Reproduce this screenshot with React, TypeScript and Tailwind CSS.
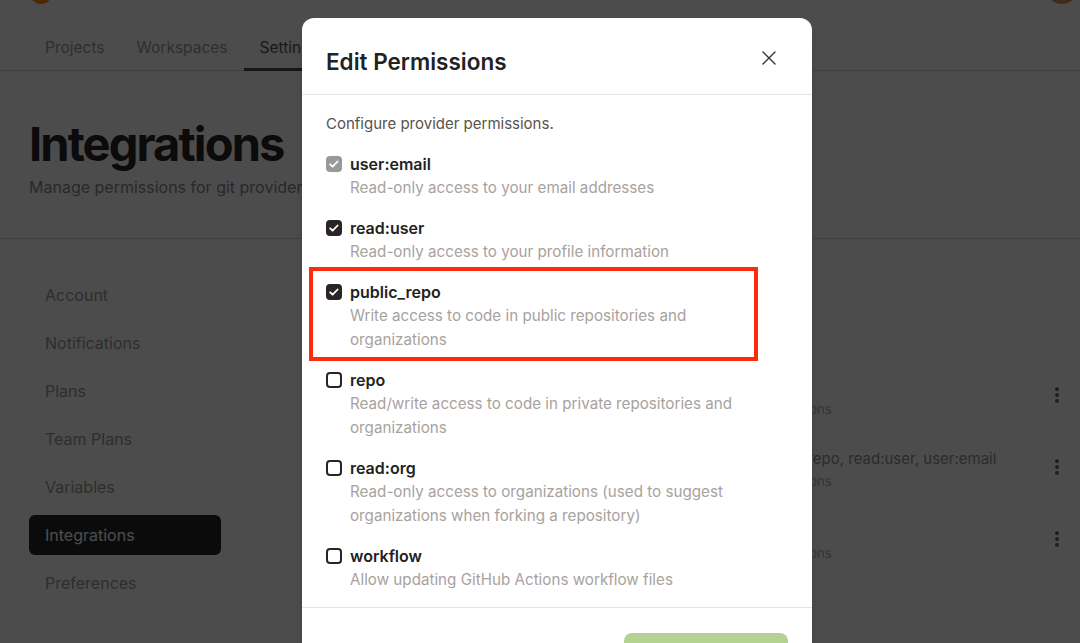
import { EllipsisVertical } from "lucide-react";

const tabs = [
  { label: "Projects", active: false },
  { label: "Workspaces", active: false },
  { label: "Settings", active: true },
];

const menu = ["Account", "Notifications", "Plans", "Team Plans", "Variables", "Integrations", "Preferences"];

const providers = [
  { id: "gitlab", scopes: "api" },
  { id: "github", scopes: "public_repo, read:user, user:email" },
  { id: "bitbucket", scopes: "repo" },
];

type Perm = { name: string; desc: string; state: "locked" | "on" | "off" };

const perms: Perm[] = [
  { name: "user:email", desc: "Read-only access to your email addresses", state: "locked" },
  { name: "read:user", desc: "Read-only access to your profile information", state: "on" },
  { name: "public_repo", desc: "Write access to code in public repositories and organizations", state: "on" },
  { name: "repo", desc: "Read/write access to code in private repositories and organizations", state: "off" },
  {
    name: "read:org",
    desc: "Read-only access to organizations (used to suggest organizations when forking a repository)",
    state: "off",
  },
  { name: "workflow", desc: "Allow updating GitHub Actions workflow files", state: "off" },
];

function Checkbox({ state }: { state: Perm["state"] }) {
  if (state === "off") {
    return <span className="h-4 w-4 shrink-0 rounded-[4px] border-2 border-[#292524] bg-white" />;
  }
  return (
    <span
      className={`flex h-4 w-4 shrink-0 items-center justify-center rounded-[4px] ${
        state === "locked" ? "bg-[#9a9a9a]" : "bg-[#292524]"
      }`}
    >
      <svg width="16" height="16" viewBox="0 0 16 16" fill="none">
        <path d="M4.2 8.3l2.4 2.4 5-5.2" stroke="white" strokeWidth="1.8" strokeLinecap="round" strokeLinejoin="round" />
      </svg>
    </span>
  );
}

export default function App() {
  return (
    <div className="relative h-[643px] w-[1080px] overflow-hidden bg-white font-['Inter',sans-serif]">
      {/* top strip: logo and avatar are cut off by the viewport */}
      <div className="flex h-[4px] items-end justify-between overflow-hidden pl-[30px] pr-[2px]">
        <span className="h-[22px] w-[22px] shrink-0 rounded-full bg-[#ff8a00]" />
        <span className="h-[32px] w-[32px] shrink-0 rounded-full bg-[#d7925a]" />
      </div>

      {/* tabs */}
      <nav className="flex border-b border-[#d8d8d8] px-[29px]">
        {tabs.map((t) => (
          <div
            key={t.label}
            className={`-mb-px border-b-[3px] px-4 pt-[32px] pb-[8px] text-[15.5px] leading-6 ${
              t.active ? "border-[#4a4a4a] text-[#555]" : "border-transparent text-[#9c9c9c]"
            }`}
          >
            {t.label}
          </div>
        ))}
      </nav>

      {/* page header */}
      <header className="border-b border-[#d8d8d8] px-[29px] pt-[49px] pb-[39px]">
        <h1 className="text-[47px] leading-[48px] font-bold tracking-[-0.04em] text-[#262626]">Integrations</h1>
        <p className="mt-[7px] text-[16px] leading-6 text-[#8a8a8a]">Manage permissions for git providers and integrations.</p>
      </header>

      <div className="flex pl-[29px] pr-[13px] pt-[36px]">
        <aside className="flex w-[192px] shrink-0 flex-col gap-2">
          {menu.map((m) => (
            <div
              key={m}
              className={`flex h-10 items-center rounded-md px-4 text-[16px] ${
                m === "Integrations" ? "bg-[#262626] text-white" : "text-[#9a9a9a]"
              }`}
            >
              {m}
            </div>
          ))}
        </aside>

        {/* provider list, mostly behind the dialog */}
        <main className="flex flex-1 flex-col pl-[100px] pt-[84px]">
          {providers.map((p) => (
            <div key={p.id} className="flex h-[72px] items-center">
              <div className="flex-1" />
              <div className="flex w-[290px] flex-col pt-[4px]">
                <span className="text-[15px] leading-6 text-[#929292]">{p.scopes}</span>
                <span className="text-[13px] leading-5 text-[#b0b0b0]">Permissions</span>
              </div>
              <EllipsisVertical size={20} strokeWidth={2.6} className="text-[#5a5a5a]" />
            </div>
          ))}
        </main>
      </div>

      {/* dim overlay */}
      <div className="absolute inset-0 bg-black/70" />

      {/* modal */}
      <div className="absolute left-[302px] top-[18px] w-[510px] rounded-xl bg-white shadow-lg">
        <div className="flex h-[77px] items-start justify-between border-b border-[#e7e5e4] pl-6 pr-[36px] pt-[30px]">
          <h2 className="text-[22.5px] leading-7 font-semibold text-[#222]">Edit Permissions</h2>
          <svg width="14" height="14" viewBox="0 0 14 14" className="mt-[3px]">
            <path d="M1 1l12 12M13 1L1 13" stroke="#333" strokeWidth="1.4" strokeLinecap="round" />
          </svg>
        </div>

        <div className="px-6 pt-[17px] pb-[15px]">
          <p className="text-[15px] leading-6 text-[#57534e]">Configure provider permissions.</p>
          <div className="mt-4 flex flex-col gap-4">
            {perms.map((p) => (
              <div key={p.name} className="flex flex-col">
                <label className="flex items-center gap-2">
                  <Checkbox state={p.state} />
                  <span className="text-[16px] leading-6 font-semibold text-[#222]">{p.name}</span>
                </label>
                <p className="max-w-[435px] pl-6 text-[15.2px] leading-6 text-[#a8a29e]">{p.desc}</p>
              </div>
            ))}
          </div>
        </div>

        <div className="flex justify-end border-t border-[#e7e5e4] px-6 pt-[25px] pb-6">
          <button className="h-10 w-[164px] rounded-lg bg-[#b4d393] text-[15px] font-semibold text-white">
            Update Permissions
          </button>
        </div>
      </div>

      {/* annotation */}
      <div className="pointer-events-none absolute left-[309px] top-[267px] h-[94px] w-[449px] border-[4px] border-[#ff2b0f]" />
    </div>
  );
}
